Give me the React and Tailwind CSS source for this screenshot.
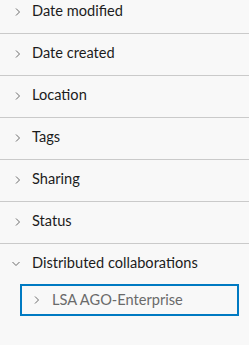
import React from 'react';

const sections = ['Date modified', 'Date created', 'Location', 'Tags', 'Sharing', 'Status'];

function ChevronRight({ color = '#6a6a6a' }) {
  return (
    <svg width="8" height="8" viewBox="0 0 8 8" fill="none">
      <polyline points="2,0.5 5.5,4 2,7.5" stroke={color} strokeWidth="1" />
    </svg>
  );
}

function ChevronDown() {
  return (
    <svg width="8" height="8" viewBox="0 0 8 8" fill="none">
      <polyline points="0.5,2 4,5.5 7.5,2" stroke="#6a6a6a" strokeWidth="1" />
    </svg>
  );
}

export default function App() {
  return (
    <div className="h-[345px] w-[249px] overflow-hidden bg-[#f8f8f8] font-['Lato',sans-serif] text-[14.6px] leading-[20px] text-[#1c1c1c]">
      <div className="mt-[-8px]">
        {sections.map((label) => (
          <div key={label} className="flex h-[42px] items-center border-b border-[#cacaca] pb-[3px] pl-[14px]">
            <span className="flex w-[18px] items-center pt-[1px]">
              <ChevronRight />
            </span>
            <span>{label}</span>
          </div>
        ))}

        {/* expanded section */}
        <div className="flex h-[40px] items-center pb-[2px] pl-[12px]">
          <span className="flex w-[20px] items-center pt-[1px]">
            <ChevronDown />
          </span>
          <span>Distributed collaborations</span>
        </div>
        <div className="ml-[20px] mr-[10px] flex h-[32px] items-center border-2 border-[#007ac2] pl-[11px] text-[#6a6a6a]">
          <span className="flex w-[19px] items-center">
            <ChevronRight />
          </span>
          <span>LSA AGO-Enterprise</span>
        </div>
      </div>
    </div>
  );
}
